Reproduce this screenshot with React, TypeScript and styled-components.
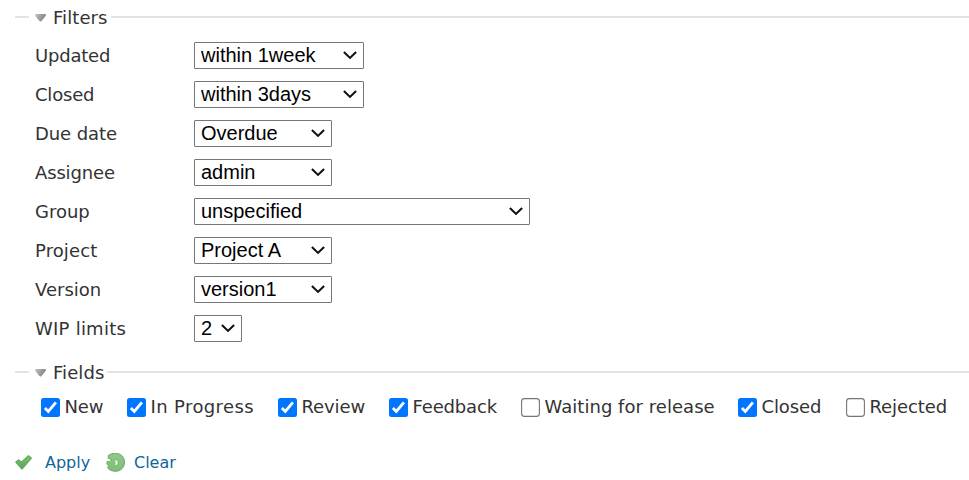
import React from "react";
import styled, { createGlobalStyle } from "styled-components";

const GlobalStyle = createGlobalStyle`
  *, *::before, *::after { box-sizing: border-box; }
  html, body { margin: 0; padding: 0; background: #fff; overflow: hidden; }
`;

const Page = styled.main`
  width: 969px;
  height: 480px;
  padding-left: 15px;
  overflow: hidden;
  background: #fff;
  color: #333;
  font: 18px/24px Verdana, "DejaVu Sans", sans-serif;
`;

const Section = styled.section<{ $top: number }>`
  padding-top: ${(p) => p.$top}px;
`;

const Legend = styled.h2<{ $gap: number }>`
  display: flex;
  align-items: center;
  height: 24px;
  margin: 0;
  font-size: 18px;
  font-weight: 400;
  &::before {
    content: "";
    width: 14px;
    height: 2px;
    margin-right: 6px;
    background: #e4e4e4;
  }
  &::after {
    content: "";
    flex: 1;
    height: 2px;
    background: #e4e4e4;
  }
  svg { flex: none; margin: 2px 6px 0 0; }
  span { width: ${(p) => p.$gap}px; padding-top: 2px; letter-spacing: 0.08px; white-space: nowrap; }
`;

const FilterList = styled.div`
  display: grid;
  grid-auto-rows: 27px;
  row-gap: 12px;
  padding: 13px 0 0 20px;
`;

const FilterRow = styled.div`
  display: grid;
  grid-template-columns: 159px auto;
  justify-content: start;
  align-items: center;
`;

const Label = styled.label<{ $spacing?: number }>`
  letter-spacing: ${(p) => p.$spacing ?? 0}px;
  white-space: nowrap;
`;

const SelectBox = styled.div<{ $width: number }>`
  display: grid;
  grid-template-columns: 1fr 28px;
  align-items: center;
  width: ${(p) => p.$width}px;
  height: 27px;
  svg { grid-area: 1 / 2; pointer-events: none; margin: 0 0 1px 6px; }
`;

const Select = styled.select`
  grid-area: 1 / 1 / 2 / 3;
  appearance: none;
  width: 100%;
  height: 27px;
  margin: 0;
  padding: 0 0 1px 6px;
  border: 1px solid #767676;
  border-radius: 1px;
  background: #fff;
  color: #000;
  font: 20px/24px "Liberation Sans", Arial, sans-serif;
`;

const FieldList = styled.div`
  display: grid;
  grid-template-columns: 86px 151px 111px 132px 217px 108px auto;
  padding: 11px 0 0 26px;
`;

const Field = styled.label<{ $spacing?: number }>`
  display: flex;
  align-items: center;
  height: 24px;
  gap: 4.5px;
  white-space: nowrap;
  letter-spacing: ${(p) => p.$spacing ?? 0}px;
  svg { flex: none; }
`;

const Actions = styled.div`
  display: flex;
  align-items: center;
  height: 24px;
  margin-top: 32px;
  font-size: 16px;
`;

const Action = styled.a<{ $gap: number; $width: number }>`
  display: flex;
  align-items: center;
  gap: ${(p) => p.$gap}px;
  width: ${(p) => p.$width}px;
  color: #169;
  text-decoration: none;
  white-space: nowrap;
  svg { flex: none; }
`;

const Triangle = () => (
  <svg width="12" height="8" viewBox="0 0 12 8">
    <defs>
      <linearGradient id="tri" x1="0" y1="0" x2="1" y2="0.4">
        <stop offset="0" stopColor="#c4c4c4" />
        <stop offset="1" stopColor="#808080" />
      </linearGradient>
    </defs>
    <path d="M.7 .1H10.5Q11.1 .3 10.8 1.8L6.3 7.2Q5.4 8 4.7 7.2L.2 2Q0 .4 .7 .1Z" fill="url(#tri)" />
  </svg>
);

const Chevron = () => (
  <svg width="16" height="10" viewBox="0 0 16 10" fill="none">
    <path d="M1.9 2L8 7.9L14.1 2" stroke="#111" strokeWidth="2.1" />
  </svg>
);

const Check = ({ on }: { on: boolean }) => (
  <svg width="19" height="19" viewBox="0 0 19 19" role="checkbox" aria-checked={on}>
    {on ? (
      <>
        <rect width="19" height="19" rx="2.5" fill="#0075ff" />
        <path d="M3.9 10.1L7.3 13.5L14.9 4.3" fill="none" stroke="#fff" strokeWidth="2.8" />
      </>
    ) : (
      <rect x=".6" y=".6" width="17.8" height="17.8" rx="2.8" fill="#fff" stroke="#767676" strokeWidth="1.1" />
    )}
  </svg>
);

const ApplyIcon = () => (
  <svg width="19" height="18" viewBox="0 0 19 18">
    <defs>
      <linearGradient id="apply" x1="0" y1="0" x2="0" y2="1">
        <stop offset="0" stopColor="#86c67b" />
        <stop offset="1" stopColor="#55a353" />
      </linearGradient>
    </defs>
    <path d="M.8 8.2L3.4 5.9L6.6 7.9L13.6 1.7L16.4 4.2L7 15Z" fill="url(#apply)" stroke="#62aa5e" strokeWidth="1.2" strokeLinejoin="round" />
  </svg>
);

const ClearIcon = () => (
  <svg width="20" height="20" viewBox="0 0 20 20">
    <defs>
      <linearGradient id="clear" x1="0" y1="0" x2="0" y2="1">
        <stop offset="0" stopColor="#91c98a" />
        <stop offset="1" stopColor="#7cbf76" />
      </linearGradient>
    </defs>
    <path
      d="M2.4 2.4C4.6 .8 7 .2 9.8 .3C15 .5 18.5 4.2 18.5 9C18.5 14.4 14.8 18.3 9.6 18.3C6.4 18.3 3.4 17.2 1.5 14.8L2.8 12.9L.9 11.2L1.2 8.2L3.2 9L5.8 6.6L2.2 5.2Z"
      fill="url(#clear)" stroke="#68aa63" strokeWidth="1" strokeLinejoin="round"
    />
    <path d="M8.1 6.8C10.8 6.5 12.3 7.8 12.1 9.8C11.9 11.8 10.4 12.7 8.1 12.3L9.3 9.6Z" fill="#f8fcf7" stroke="#68aa63" strokeWidth=".7" />
  </svg>
);

const filters = [
  { label: "Updated", value: "within 1week", width: 170, spacing: -0.2 },
  { label: "Closed", value: "within 3days", width: 170, spacing: -0.2 },
  { label: "Due date", value: "Overdue", width: 138, spacing: -0.1 },
  { label: "Assignee", value: "admin", width: 138, spacing: -0.15 },
  { label: "Group", value: "unspecified", width: 336, spacing: 0 },
  { label: "Project", value: "Project A", width: 138, spacing: 0.1 },
  { label: "Version", value: "version1", width: 138, spacing: 0 },
  { label: "WIP limits", value: "2", width: 48, spacing: 0.24 },
];

const fields = [
  { label: "New", on: true, spacing: -0.1 },
  { label: "In Progress", on: true, spacing: 0.38 },
  { label: "Review", on: true, spacing: -0.1 },
  { label: "Feedback", on: true, spacing: -0.15 },
  { label: "Waiting for release", on: false, spacing: 0.04 },
  { label: "Closed", on: true, spacing: -0.1 },
  { label: "Rejected", on: false, spacing: -0.1 },
];

export default function App() {
  return (
    <Page>
      <GlobalStyle />
      <Section $top={5}>
        <Legend $gap={58}><Triangle /><span>Filters</span></Legend>
        <FilterList>
          {filters.map((f) => (
            <FilterRow key={f.label}>
              <Label $spacing={f.spacing}>{f.label}</Label>
              <SelectBox $width={f.width}>
                <Select aria-label={f.label}><option>{f.value}</option></Select>
                <Chevron />
              </SelectBox>
            </FilterRow>
          ))}
        </FilterList>
      </Section>
      <Section $top={18}>
        <Legend $gap={54}><Triangle /><span>Fields</span></Legend>
        <FieldList>
          {fields.map((f) => (
            <Field key={f.label} $spacing={f.spacing}><Check on={f.on} />{f.label}</Field>
          ))}
        </FieldList>
      </Section>
      <Actions>
        <Action href="#" $gap={11} $width={91}><ApplyIcon />Apply</Action>
        <Action href="#" $gap={8} $width={80}><ClearIcon />Clear</Action>
      </Actions>
    </Page>
  );
}
